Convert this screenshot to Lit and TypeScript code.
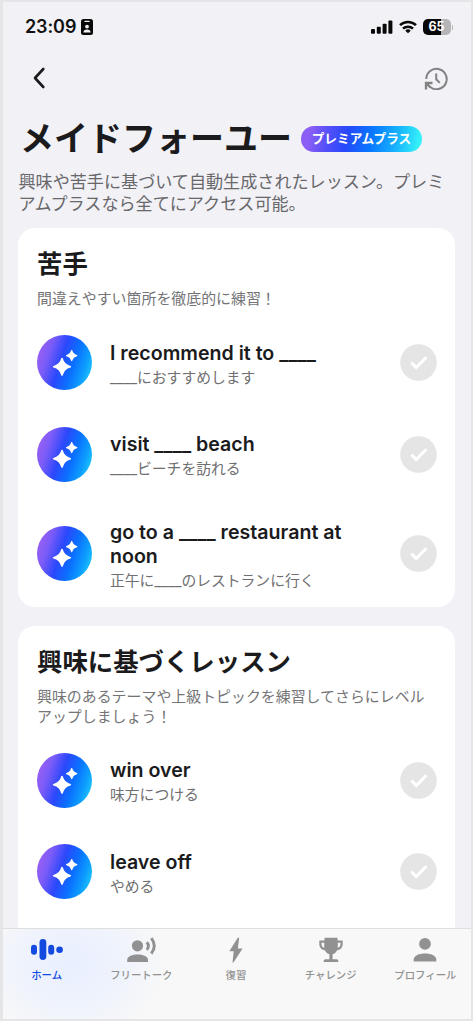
import { LitElement, html, css, svg } from "lit";
import { customElement, property } from "lit/decorators.js";

interface Lesson { title: string; sub: string; }
interface Section { title: string; desc: string; lessons: Lesson[]; }

const sections: Section[] = [
  {
    title: "苦手",
    desc: "間違えやすい箇所を徹底的に練習！",
    lessons: [
      { title: "I recommend it to ____", sub: "____におすすめします" },
      { title: "visit ____ beach", sub: "____ビーチを訪れる" },
      { title: "go to a ____ restaurant at noon", sub: "正午に____のレストランに行く" },
    ],
  },
  {
    title: "興味に基づくレッスン",
    desc: "興味のあるテーマや上級トピックを練習してさらにレベルアップしましょう！",
    lessons: [
      { title: "win over", sub: "味方につける" },
      { title: "leave off", sub: "やめる" },
    ],
  },
];

const tabs = [
  {
    label: "ホーム",
    icon: svg`<rect x="0" y="7.800" width="6" height="10" rx="3"/><rect x="8.500" y="2" width="6.800" height="21" rx="3.400"/><rect x="17.200" y="7.800" width="6" height="10" rx="3"/><circle cx="28.600" cy="12.700" r="3.300"/>`,
  },
  {
    label: "フリートーク",
    icon: svg`<circle cx="12.500" cy="8.800" r="5.600"/><path d="M2.200 25v-2.200c0-3.600 5.600-5.300 10.400-5.300s10.400 1.700 10.400 5.300V25z"/><path d="M21.800 5.200q3.200 3.700 0 7.600M26.300 1.200q6 7.500 0 15.400" fill="none" stroke="currentColor" stroke-width="2.900"/>`,
  },
  {
    label: "復習",
    icon: svg`<path d="M17.800 .8 9.300 14.200h4.400L12.500 25.500h1L22.600 11.500h-4.700L19.200 .8z"/>`,
  },
  {
    label: "チャレンジ",
    icon: svg`<path d="M9.500 .8h13v2.700h5.200v3.600c0 3.700-2.500 6-5.700 6.300-1 2-2.600 3.300-4.400 3.900v5h4c1 0 1.700.8 1.700 1.700v1H8.700v-1c0-1 .7-1.700 1.700-1.700h4v-5c-1.800-.6-3.400-1.900-4.400-3.900-3.200-.3-5.700-2.600-5.700-6.300V3.500h5.200zM6.500 5.800v1.300c0 2 1 3.300 2.700 3.700V5.800zm16.300 0v5c1.700-.4 2.700-1.700 2.700-3.700V5.800z"/>`,
  },
  {
    label: "プロフィール",
    icon: svg`<circle cx="16" cy="6.900" r="5.900"/><path d="M4.700 24.500v-2c0-3.900 5.600-6 11.300-6s11.300 2.100 11.300 6v2z"/>`,
  },
];

const fonts = css`"Inter", "Noto Sans CJK JP", sans-serif`;

@customElement("status-bar")
export class StatusBar extends LitElement {
  static styles = css`
    :host { display: flex; align-items: center; height: 22px; padding: 14px 18px 0 22px; color: #111; font: 600 18px/22px ${fonts}; }
    .time { letter-spacing: -0.100px; width: 51px; }
    .id { margin-left: 5px; }
    .right { margin-left: auto; display: flex; align-items: center; gap: 6px; }
    svg { display: block; }
    .battery { display: flex; align-items: center; gap: 1px; }
    .cell { width: 28px; height: 16px; border-radius: 5px; background: linear-gradient(90deg, #080808 65%, #b5b5b8 65%); color: #fff; font-size: 12.500px; font-weight: 700; line-height: 16px; text-align: center; }
    .tip { width: 1.500px; height: 5px; border-radius: 0 2px 2px 0; background: #b5b5b8; }
  `;
  render() {
    return html`
      <span class="time">23:09</span>
      <svg class="id" width="12" height="16" viewBox="0 0 12 16">
        <rect width="12" height="16" rx="2.500" fill="#080808"/>
        <rect x="3.300" y="1.700" width="5.400" height="1.400" rx=".7" fill="#f2f1f6"/>
        <circle cx="6" cy="7.600" r="1.900" fill="#f2f1f6"/>
        <path d="M2.300 13.500c0-2 1.700-3 3.700-3s3.700 1 3.700 3z" fill="#f2f1f6"/>
      </svg>
      <div class="right">
        <svg width="22" height="14" viewBox="0 0 22 14" fill="#080808">
          <rect x="0" y="9" width="4" height="4.700" rx="1"/><rect x="5.800" y="6.700" width="4" height="7" rx="1"/>
          <rect x="11.600" y="3.700" width="4" height="10" rx="1"/><rect x="17.400" y=".5" width="4" height="13.200" rx="1"/>
        </svg>
        <svg width="18" height="14" viewBox="0 0 18 14" fill="none" stroke="#080808" stroke-width="2.500">
          <path d="M1 5.200a11.500 11.500 0 0 1 16 0M4 8.700a7.200 7.200 0 0 1 10 0"/>
          <path d="M9 13.300 6.300 10.700a3.800 3.800 0 0 1 5.400 0z" fill="#080808" stroke="none"/>
        </svg>
        <div class="battery"><div class="cell">65</div><div class="tip"></div></div>
      </div>
    `;
  }
}

@customElement("lesson-row")
export class LessonRow extends LitElement {
  @property({ attribute: false }) lesson!: Lesson;
  static styles = css`
    :host { display: flex; align-items: center; }
    svg { display: block; flex: none; }
    .orb { display: grid; place-items: center; flex: none; width: 55px; height: 55px; border-radius: 50%; background: linear-gradient(108deg, #9a60f3 8%, #7c5cf8 24%, #2b48fc 44%, #0a70ff 63%, #0d9dfe 80%, #27dcfb 98%); }
    .text { flex: 1; margin: 0 0 -1.500px 18px; padding: 1.500px 40px 0 0; font-family: ${fonts}; }
    .title { font-size: 19.600px; font-weight: 600; line-height: 24.500px; color: #1b1b1d; letter-spacing: 0; }
    .sub { margin: 1.300px 0 -1.300px; font-size: 14.800px; line-height: 22px; color: #6f6f71; }
  `;
  render() {
    return html`
      <div class="orb">
        <svg width="55" height="55" viewBox="0 0 55 55" fill="#fff" stroke="#fff" stroke-linejoin="round">
          <path stroke-width="1.600" d="M25 23.500q1.700 6.500 8.300 8.300q-6.600 1.700-8.300 8.300q-1.700-6.600-8.300-8.300q6.600-1.800 8.300-8.300z"/>
          <path stroke-width="1.200" d="M34.700 15.500q1 4.300 5.100 5.100q-4.100 1-5.100 5.100q-1-4.100-5.100-5.100q4.100-.8 5.100-5.100z"/>
        </svg>
      </div>
      <div class="text">
        <div class="title">${this.lesson.title}</div>
        <div class="sub">${this.lesson.sub}</div>
      </div>
      <svg width="37" height="37" viewBox="0 0 37 37">
        <circle cx="18.500" cy="18.500" r="18.300" fill="#e5e5e5"/>
        <path d="m11.300 18.500 4.900 5 10.200-10.300" fill="none" stroke="#fff" stroke-width="3"/>
      </svg>
    `;
  }
}

@customElement("tab-bar")
export class TabBar extends LitElement {
  static styles = css`
    :host { display: grid; grid-template-columns: repeat(5, 94.700px); justify-content: center; flex: none; height: 90px; padding-right: 2px; border-top: 1.500px solid #dededf; background: radial-gradient(ellipse 95px 80px at 68px 35px, #e8efff 0%, rgba(232,239,255,.6) 50%, rgba(248,248,248,0) 100%), #f8f8f8; }
    .tab { display: flex; flex-direction: column; align-items: center; padding-top: 8px; color: #919191; font: 500 10.400px/16px ${fonts}; white-space: nowrap; }
    .tab.active { color: #134be0; }
    .label { margin-top: 4px; }
    svg { display: block; }
  `;
  render() {
    return html`${tabs.map((t, i) => html`
      <div class="tab ${i === 0 ? "active" : ""}">
        <svg width="32" height="27" viewBox="0 0 32 27" fill="currentColor">${t.icon}</svg>
        <span class="label">${t.label}</span>
      </div>`)}`;
  }
}

@customElement("app-root")
export class AppRoot extends LitElement {
  static styles = css`
    :host { display: block; height: 1024px; background: #fff; overflow: hidden; font-family: ${fonts}; }
    .frame { box-sizing: border-box; display: flex; flex-direction: column; height: 1021px; border: 2px solid #e5e5e8; border-width: 2px 2px 2px 3px; background: #f2f1f6; }
    .toolbar { display: flex; justify-content: space-between; align-items: center; height: 24px; padding: 28px 23px 0 30px; }
    .toolbar svg { display: block; }
    .heading { display: flex; align-items: center; height: 48px; padding: 25px 0 0 17px; }
    h1 { margin: 0; font-size: 34px; line-height: 48px; font-weight: 700; color: #1b1b1d; white-space: nowrap; width: 272px; }
    .badge { margin-left: 9px; width: 121px; height: 26px; border-radius: 13px; background: linear-gradient(100deg, #8b5ef5 8%, #5650f8 22%, #2748fa 38%, #0878ff 58%, #17b2fe 78%, #35f0f8 96%); color: #fff; font-size: 12.700px; font-weight: 700; line-height: 26px; text-align: center; white-space: nowrap; }
    .lead { margin: 8px 0 0; padding-left: 15.500px; width: 435px; font-size: 17.100px; line-height: 22px; color: #68686b; }
    .scroll { flex: 1; min-height: 0; overflow: hidden; padding: 13px 16px 0 15px; }
    .card { background: #fff; border-radius: 17px; padding: 19px 18px 18px 19px; margin-bottom: 19px; }
    .card:last-child { padding-bottom: 80px; }
    h2 { margin: 0; font-size: 25.400px; line-height: 34px; font-weight: 700; color: #1b1b1d; }
    .desc { margin: 9px 0 25.500px; width: 395px; font-size: 14.930px; line-height: 19.500px; color: #747476; }
    .rows { display: flex; flex-direction: column; gap: 36.500px; }
  `;
  render() {
    return html`
      <div class="frame">
        <status-bar></status-bar>
        <div class="toolbar">
          <svg width="14" height="22" viewBox="0 0 14 22" fill="none" stroke="#1b1b1d" stroke-width="2.600" stroke-linecap="round" stroke-linejoin="round"><path d="M10.300 2 2 11l8.300 9"/></svg>
          <svg width="24" height="24" viewBox="0 0 24 24" fill="none" stroke="#828284" stroke-width="2">
            <path d="M2.300 13A10.200 10.200 0 1 1 8.300 22.300Q5.500 21 3.300 18"/>
            <path d="M2 23.500V17h6.500" stroke-width="2.300"/><path d="m2.500 17.500 4 4"/>
            <path d="M12.200 7.500v5.800l3.600 3.600"/>
          </svg>
        </div>
        <div class="heading"><h1>メイドフォーユー</h1><span class="badge">プレミアムプラス</span></div>
        <p class="lead">興味や苦手に基づいて自動生成されたレッスン。プレミアムプラスなら全てにアクセス可能。</p>
        <div class="scroll">
          ${sections.map((s) => html`
            <section class="card">
              <h2>${s.title}</h2>
              <p class="desc">${s.desc}</p>
              <div class="rows">${s.lessons.map((l) => html`<lesson-row .lesson=${l}></lesson-row>`)}</div>
            </section>`)}
        </div>
        <tab-bar></tab-bar>
      </div>
    `;
  }
}
